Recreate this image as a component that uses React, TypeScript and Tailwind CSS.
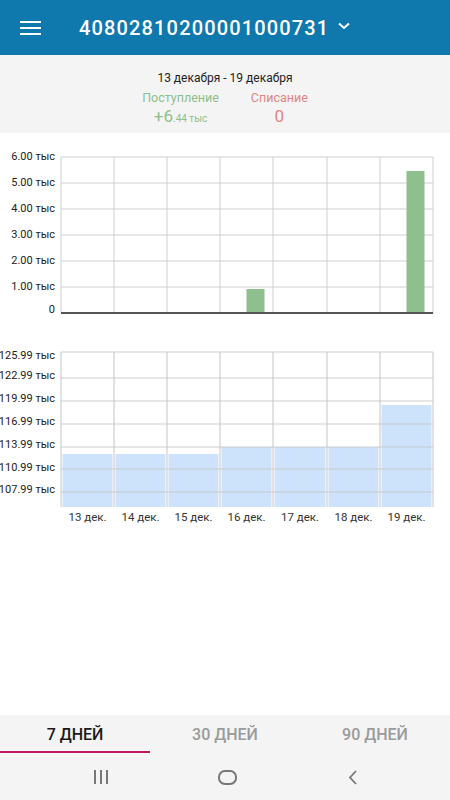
import React from "react";

const COLS = [61, 114, 167, 220, 273, 327, 380, 433];
const DAYS = ["13 дек.", "14 дек.", "15 дек.", "16 дек.", "17 дек.", "18 дек.", "19 дек."];

// income bars (top y in svg coords, 180 = zero line)
const INCOME = [180, 180, 180, 156, 180, 180, 38];
// balance bars (top y, 177 = bottom)
const BALANCE = [124, 124, 124, 117, 117, 117, 75];

const IncomeChart = () => {
  const lines = [24, 50, 76, 102, 128, 154];
  const labels = ["6.00 тыс", "5.00 тыс", "4.00 тыс", "3.00 тыс", "2.00 тыс", "1.00 тыс"];
  return (
    <svg width="450" height="197" className="block">
      {lines.map((y) => (
        <line key={y} x1={61} x2={433} y1={y} y2={y} stroke="#cfcfcf" strokeWidth="1" />
      ))}
      {COLS.map((x) => (
        <line key={x} x1={x} x2={x} y1={24} y2={180} stroke="#cfcfcf" strokeWidth="1" />
      ))}
      {INCOME.map((top, i) =>
        top < 180 ? (
          <rect key={i} x={COLS[i] + 26.5} y={top} width={18} height={180 - top} fill="#8dc08d" />
        ) : null
      )}
      <line x1={61} x2={433} y1={180} y2={180} stroke="#555" strokeWidth="2" />
      {labels.map((t, i) => (
        <text key={t} x={55} y={lines[i] + 3} textAnchor="end" fontSize="11" fill="#222">
          {t}
        </text>
      ))}
      <text x={55} y={180} textAnchor="end" fontSize="11" fill="#222">
        0
      </text>
    </svg>
  );
};

const BalanceChart = () => {
  const lines = [22, 48, 71, 94, 117, 139, 162];
  const labelY = [25, 45, 68, 91, 114, 137, 159];
  const labels = ["125.99 тыс", "122.99 тыс", "119.99 тыс", "116.99 тыс", "113.99 тыс", "110.99 тыс", "107.99 тыс"];
  return (
    <svg width="450" height="200" className="block">
      {BALANCE.map((top, i) => (
        <rect key={i} x={COLS[i] + 1.5} y={top} width={COLS[i + 1] - COLS[i] - 3} height={177 - top} fill="#cde3fc" />
      ))}
      {lines.map((y) => (
        <line key={y} x1={61} x2={433} y1={y} y2={y} stroke="#c4c4c4" strokeOpacity="0.85" strokeWidth="1" />
      ))}
      {COLS.map((x) => (
        <line key={x} x1={x} x2={x} y1={22} y2={177} stroke="#c4c4c4" strokeWidth="1" />
      ))}
      {labels.map((t, i) => (
        <text key={t} x={55} y={labelY[i] + 4} textAnchor="end" fontSize="11" fill="#222">
          {t}
        </text>
      ))}
      {DAYS.map((d, i) => (
        <text key={d} x={(COLS[i] + COLS[i + 1]) / 2} y={191} textAnchor="middle" fontSize="11.5" fill="#333">
          {d}
        </text>
      ))}
    </svg>
  );
};

export default function App() {
  return (
    <div className="h-[800px] w-[450px] flex flex-col bg-white font-['Roboto',sans-serif]">
      {/* toolbar */}
      <div className="h-[55px] bg-[#0f78ad] flex items-center text-white shrink-0">
        <div className="w-[79px] flex justify-start pl-5">
          <svg width="21" height="16" viewBox="0 0 21 16">
            <rect x="0" y="1" width="21" height="2" fill="white" />
            <rect x="0" y="7" width="21" height="2" fill="white" />
            <rect x="0" y="13" width="21" height="2" fill="white" />
          </svg>
        </div>
        <span className="text-[20px] font-medium tracking-[1.15px]">40802810200001000731</span>
        <svg width="14" height="10" viewBox="0 0 14 10" className="ml-2 -mt-1">
          <path d="M2 2.5 L7 7 L12 2.5" fill="none" stroke="white" strokeWidth="2" />
        </svg>
      </div>

      {/* summary */}
      <div className="h-[78px] bg-[#f4f4f4] flex flex-col items-center pt-[15px] shrink-0">
        <div className="text-[12px] text-[#222] leading-[16px]">13 декабря - 19 декабря</div>
        <div className="flex gap-8 mt-[4px]">
          <div className="flex flex-col items-center">
            <span className="text-[12.5px] text-[#8dbf8d] leading-[16px]">Поступление</span>
            <span className="text-[#8dbf8d] leading-[20px]">
              <span className="text-[17px]">+6</span>
              <span className="text-[10px]">.44 тыс</span>
            </span>
          </div>
          <div className="flex flex-col items-center">
            <span className="text-[12.5px] text-[#e08585] leading-[16px]">Списание</span>
            <span className="text-[17px] text-[#e08585] leading-[20px]">0</span>
          </div>
        </div>
      </div>

      <IncomeChart />
      <BalanceChart />

      <div className="flex-1" />

      {/* period tabs */}
      <div className="h-[38px] bg-[#f4f4f4] flex shrink-0">
        {["7 ДНЕЙ", "30 ДНЕЙ", "90 ДНЕЙ"].map((t, i) => (
          <div
            key={t}
            className={
              i === 0
                ? "flex-1 flex items-center justify-center pt-[3px] text-[16px] font-medium text-[#1a1a1a] border-b-2 border-[#c2185b]"
                : "flex-1 flex items-center justify-center pt-[3px] text-[16px] font-medium text-[#9a9a9a] border-b-2 border-transparent"
            }
          >
            {t}
          </div>
        ))}
      </div>

      {/* system nav */}
      <div className="h-[47px] bg-[#f4f4f4] flex items-center pl-[93px] pt-[1px] shrink-0">
        <svg width="16" height="14" viewBox="0 0 16 14">
          <rect x="1" y="0" width="2" height="14" fill="#777" />
          <rect x="7" y="0" width="2" height="14" fill="#777" />
          <rect x="13" y="0" width="2" height="14" fill="#777" />
        </svg>
        <svg width="19" height="15" viewBox="0 0 19 15" className="ml-[109px]">
          <rect x="1" y="1" width="17" height="13" rx="6" fill="none" stroke="#777" strokeWidth="2" />
        </svg>
        <svg width="10" height="15" viewBox="0 0 10 15" className="ml-[111px]">
          <path d="M8 1 L2 7.5 L8 14" fill="none" stroke="#777" strokeWidth="1.8" />
        </svg>
      </div>
    </div>
  );
}
